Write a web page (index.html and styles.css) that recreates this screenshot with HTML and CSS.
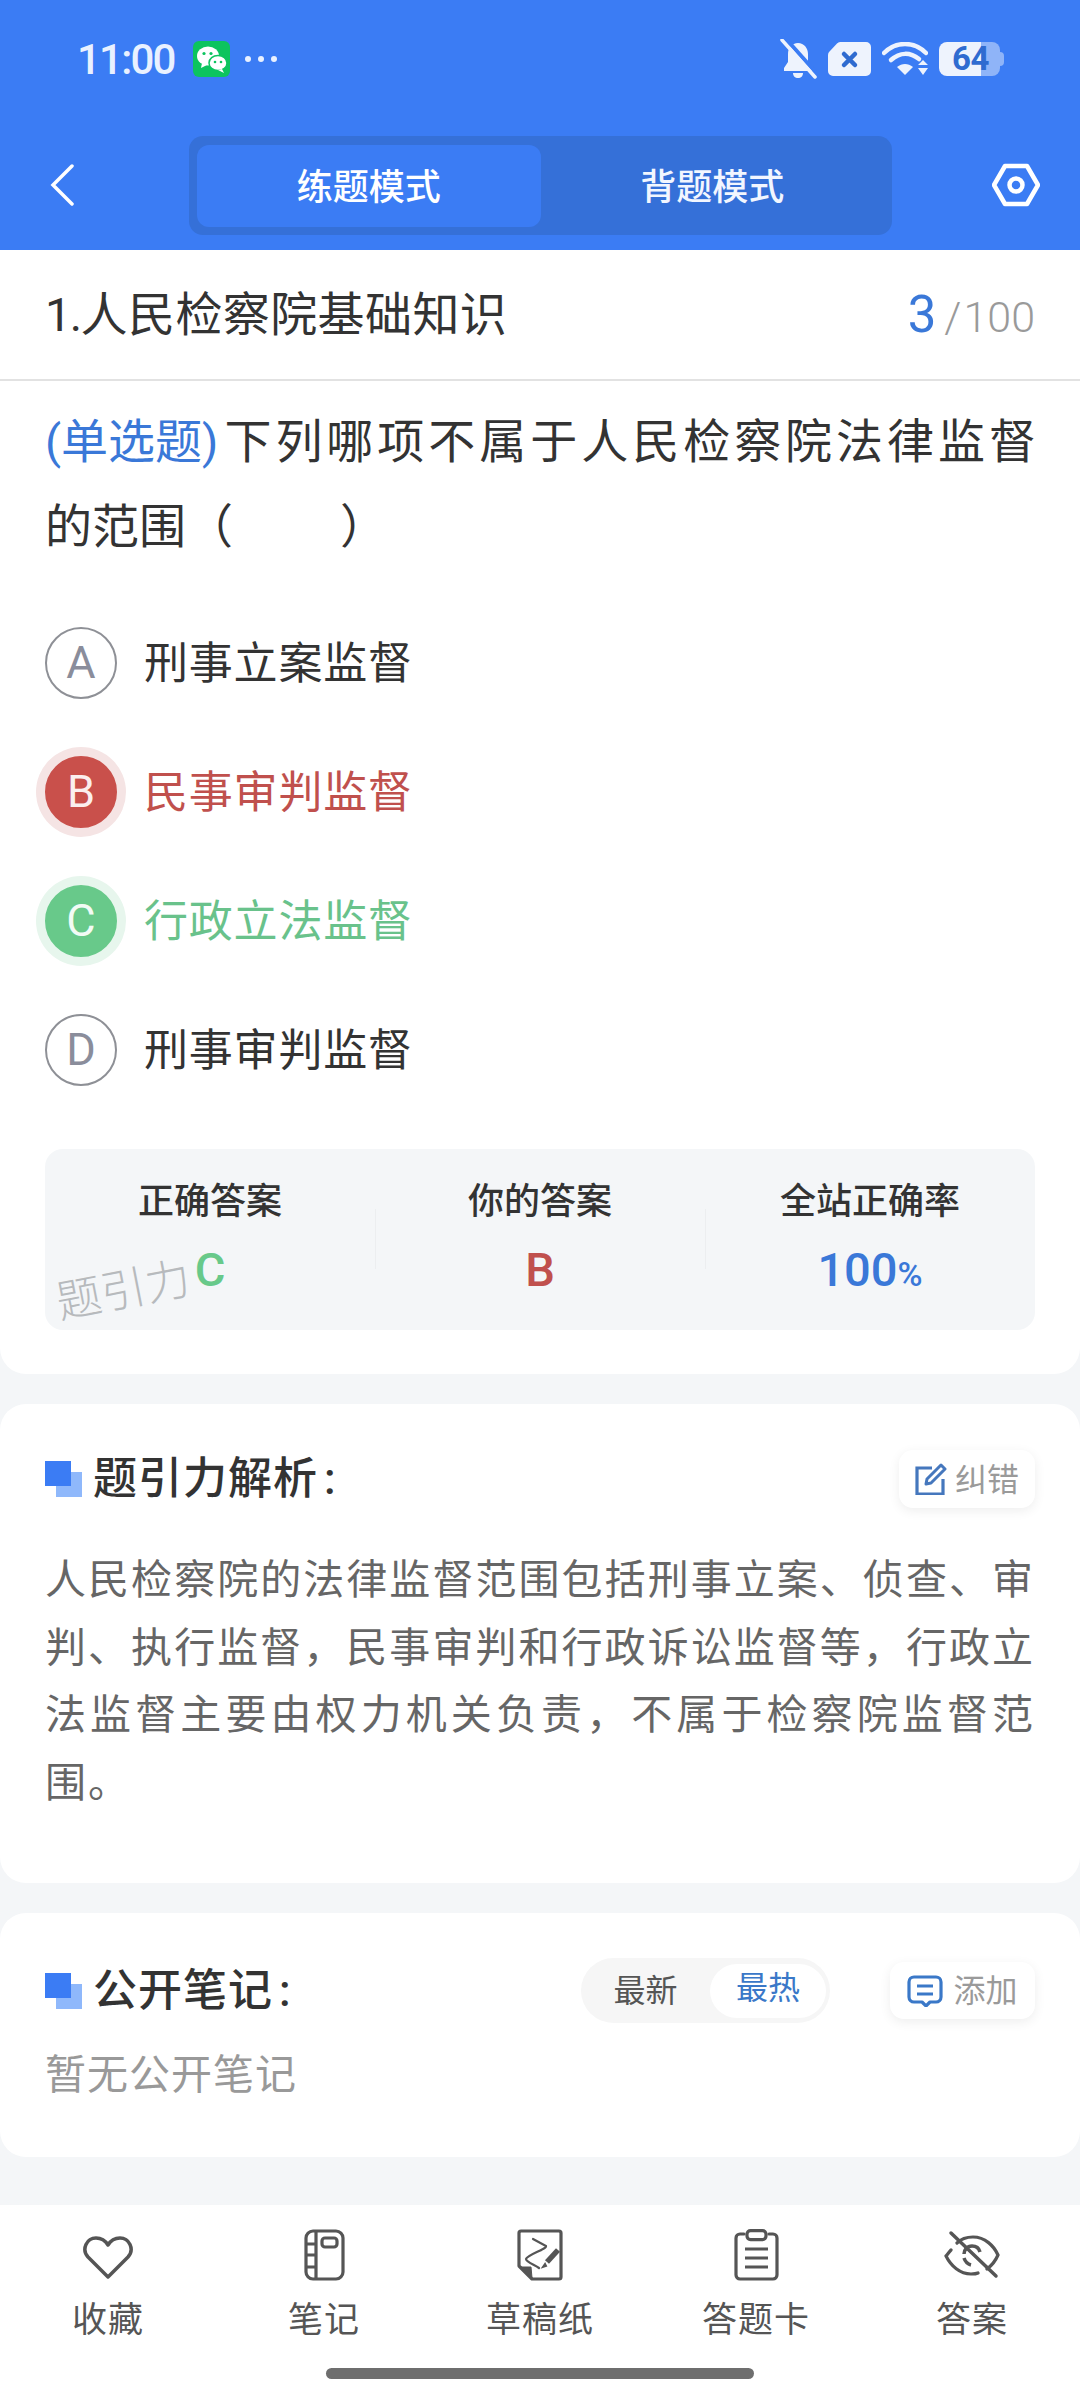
FILE: index.html
```html
<!DOCTYPE html>
<html lang="zh-CN">
<head>
<meta charset="utf-8">
<title>练题模式</title>
<link rel="stylesheet" href="styles.css">
</head>
<body>
<div class="app">
  <header class="top">
    <div class="status">
      <span class="time">11:00</span>
      <svg class="wechat" viewBox="0 0 37 36" width="37" height="36">
        <rect width="37" height="36" rx="6" fill="#0cc45e"/>
        <ellipse cx="15" cy="15" rx="11" ry="9.5" fill="#fff"/>
        <path d="M9 22l-1 5 6-3z" fill="#fff"/>
        <ellipse cx="25" cy="22" rx="9" ry="7.6" fill="#fff" stroke="#0cc45e" stroke-width="1.5"/>
        <path d="M29 28l2 4-6-3z" fill="#fff"/>
        <circle cx="11" cy="12.500" r="1.600" fill="#0cc45e"/>
        <circle cx="18" cy="12.500" r="1.600" fill="#0cc45e"/>
        <circle cx="22" cy="21" r="1.300" fill="#0cc45e"/>
        <circle cx="28" cy="21" r="1.300" fill="#0cc45e"/>
      </svg>
      <span class="dots"><i></i><i></i><i></i></span>
      <div class="status-right">
        <svg viewBox="0 0 38 40" width="38" height="40">
          <path d="M19 4c-6 0-10 5-10 11v8l-4 6v3h28v-3l-4-6v-8c0-6-4-11-10-11z" fill="#eef3fd"/>
          <path d="M14 34h10c0 3-2 5-5 5s-5-2-5-5z" fill="#eef3fd"/>
          <path d="M7 0l33 37" stroke="#3b7cf4" stroke-width="4"/>
          <path d="M3 1l33 37" stroke="#eef3fd" stroke-width="3.500" stroke-linecap="round"/>
        </svg>
        <svg viewBox="0 0 43 34" width="43" height="34">
          <path d="M13 0h25a5 5 0 0 1 5 5v24a5 5 0 0 1-5 5H5a5 5 0 0 1-5-5V13a5 5 0 0 1 1.500-3.500L9 1.500A5 5 0 0 1 13 0z" fill="#eef3fd"/>
          <path d="M16 12l11 11M27 12L16 23" stroke="#2f6bd0" stroke-width="4.500" stroke-linecap="round"/>
        </svg>
        <svg viewBox="0 0 46 34" width="46" height="34">
          <path d="M2 11C14-1 32-1 44 11" fill="none" stroke="#eef3fd" stroke-width="4.500" stroke-linecap="round"/>
          <path d="M9 18c9-8 19-8 28-1" fill="none" stroke="#eef3fd" stroke-width="4.500" stroke-linecap="round"/>
          <path d="M15 25c5-4 11-4 16 0l-8 8z" fill="#eef3fd"/>
          <path d="M36 23l5-5 5 5zM36 26h10l-5 7z" fill="#eef3fd"/>
        </svg>
        <div class="battery"><span>64</span></div>
      </div>
    </div>
    <div class="nav">
      <svg class="back" viewBox="0 0 24 42" width="24" height="42">
        <path d="M22 2L3 21l19 19" fill="none" stroke="#fff" stroke-width="3.500" stroke-linecap="round"/>
      </svg>
      <div class="tabs">
        <div class="tab tab-on">练题模式</div>
        <div class="tab">背题模式</div>
      </div>
      <svg class="gear" viewBox="0 0 48 44" width="48" height="44">
        <path d="M13 3h22l11 19-11 19H13L2 22z" fill="none" stroke="#fff" stroke-width="4.500" stroke-linejoin="round"/>
        <circle cx="24" cy="22" r="6.500" fill="none" stroke="#fff" stroke-width="4.500"/>
      </svg>
    </div>
  </header>

  <main class="main">
    <section class="card card-question">
      <div class="title-bar">
        <h1 class="chapter"><span class="chapter-no">1.</span>人民检察院基础知识</h1>
        <div class="progress"><b>3</b><span class="slash">/</span><span>100</span></div>
      </div>
      <div class="question">
        <p class="q-first"><span class="q-type">(单选题)</span>下列哪项不属于人民检察院法律监督</p>
        <p class="q-second">的范围（<span class="q-blank"></span>）</p>
      </div>
      <ul class="options">
        <li class="option"><span class="letter">A</span><span class="opt-text">刑事立案监督</span></li>
        <li class="option wrong"><span class="letter">B</span><span class="opt-text">民事审判监督</span></li>
        <li class="option right"><span class="letter">C</span><span class="opt-text">行政立法监督</span></li>
        <li class="option"><span class="letter">D</span><span class="opt-text">刑事审判监督</span></li>
      </ul>
      <div class="stats">
        <div class="stat"><div class="stat-label">正确答案</div><div class="stat-value green">C</div></div>
        <div class="stat"><div class="stat-label">你的答案</div><div class="stat-value red">B</div></div>
        <div class="stat"><div class="stat-label">全站正确率</div><div class="stat-value blue">100<small>%</small></div></div>
        <span class="watermark">题引力</span>
      </div>
    </section>

    <section class="card card-analysis">
      <div class="card-head">
        <svg class="mark" viewBox="0 0 37 36" width="37" height="36"><rect x="11" y="11" width="26" height="25" fill="#8fb8fb"/><rect width="26" height="25" fill="#3b7cf4"/></svg>
        <h2 class="card-title">题引力解析<span class="colon">:</span></h2>
        <div class="pill-btn">
          <svg viewBox="0 0 32 32" width="32" height="32">
            <path d="M17 5H2v26h26V16" fill="none" stroke="#4577bd" stroke-width="3.200"/>
            <path d="M12 16L26 2l4 4-14 14-5 1z" fill="none" stroke="#4577bd" stroke-width="3" stroke-linejoin="round"/>
          </svg>
          <span class="pill-text">纠错</span>
        </div>
      </div>
      <p class="analysis">人民检察院的法律监督范围包括刑事立案、侦查、审判、执行监督，民事审判和行政诉讼监督等，行政立法监督主要由权力机关负责，不属于检察院监督范围。</p>
    </section>

    <section class="card card-notes">
      <div class="card-head">
        <svg class="mark" viewBox="0 0 37 36" width="37" height="36"><rect x="11" y="11" width="26" height="25" fill="#8fb8fb"/><rect width="26" height="25" fill="#3b7cf4"/></svg>
        <h2 class="card-title">公开笔记<span class="colon">:</span></h2>
        <div class="segment">
          <span class="seg"><span class="seg-text">最新</span></span>
          <span class="seg seg-on"><span class="seg-text">最热</span></span>
        </div>
        <div class="pill-btn pill-add">
          <svg viewBox="0 0 36 32" width="36" height="32">
            <path d="M7 2h22a5 5 0 0 1 5 5v15a5 5 0 0 1-5 5h-6l-4 4-4-4H7a5 5 0 0 1-5-5V7a5 5 0 0 1 5-5z" fill="none" stroke="#3a78c8" stroke-width="3.200" stroke-linejoin="round"/>
            <path d="M10 11h16M10 19h16" stroke="#3a78c8" stroke-width="3.200"/>
          </svg>
          <span class="pill-text">添加</span>
        </div>
      </div>
      <p class="empty">暂无公开笔记</p>
    </section>
  </main>

  <footer class="tabbar">
    <div class="bar-items">
      <div class="bar-item">
        <svg class="heart" viewBox="0 0 52 44" width="52" height="44">
          <path d="M26 41L6 21C-1 13 5 2 14 2c5 0 9 2 12 7 3-5 7-7 12-7 9 0 15 11 8 19z" fill="none" stroke="#555" stroke-width="3.500" stroke-linejoin="round"/>
        </svg>
        <span>收藏</span>
      </div>
      <div class="bar-item">
        <svg viewBox="0 0 41 52" width="41" height="52" fill="none" stroke="#555" stroke-width="3.200">
          <rect x="2" y="2" width="37" height="48" rx="7"/>
          <path d="M12 2v48M2 15h10M2 26h10M2 38h10"/>
          <rect x="18" y="9" width="15" height="9" rx="3"/>
        </svg>
        <span>笔记</span>
      </div>
      <div class="bar-item">
        <svg viewBox="0 0 46 52" width="46" height="52" fill="none" stroke="#555" stroke-width="3.200">
          <path d="M4 2h38a2 2 0 0 1 2 2v44a2 2 0 0 1-2 2H15L2 37V4a2 2 0 0 1 2-2z" stroke-linejoin="round"/>
          <path d="M3 38l11 0 1 11z" fill="#555" stroke-width="1"/>
          <path d="M16 10l13 7C30 20 10 26 9 30c0 3 9 6 13 9" stroke-width="2.200" stroke-linecap="round"/>
          <path d="M41 21L30 33" stroke-width="5.500"/>
          <path d="M28 35l-2 3 3-1z" stroke-width="2"/>
        </svg>
        <span>草稿纸</span>
      </div>
      <div class="bar-item">
        <svg viewBox="0 0 45 52" width="45" height="52" fill="none" stroke="#555" stroke-width="3.200">
          <path d="M10 5H6a4 4 0 0 0-4 4v37a4 4 0 0 0 4 4h33a4 4 0 0 0 4-4V9a4 4 0 0 0-4-4h-4" stroke-linecap="round"/>
          <rect x="13" y="1.600" width="19" height="9" rx="3.500"/>
          <path d="M11 20h23M11 29h23M11 38h23"/>
        </svg>
        <span>答题卡</span>
      </div>
      <div class="bar-item">
        <svg viewBox="0 0 56 46" width="56" height="46" fill="none" stroke="#555" stroke-width="3.200">
          <path d="M2 24c1-1 3-4 5-6M13 11C18 6 23 5 29 5c12 0 21 9 25 18-3 7-7 11-11 14M34 41c-2 1-4 1-7 1-11 0-20-8-25-18" stroke-linecap="round"/>
          <path d="M20 22c0-4 3-8 8-8 4 0 7 2 8 6M20 26c1 3 3 6 7 7" stroke-width="3.500"/>
          <path d="M7 1l45 43" stroke-linecap="round" stroke-width="3.500"/>
        </svg>
        <span>答案</span>
      </div>
    </div>
    <div class="home-bar"></div>
  </footer>
</div>
</body>
</html>
```

FILE: styles.css
```css
* { box-sizing: border-box; }
html, body { margin: 0; padding: 0; }
body {
  font-family: "Roboto", "Noto Sans CJK SC", sans-serif;
  color: #333;
  background: #f4f6f8;
}
h1, h2, p, ul { margin: 0; padding: 0; }
ul { list-style: none; }
svg { display: block; flex: none; }

.app {
  width: 1080px;
  height: 2400px;
  display: flex;
  flex-direction: column;
  overflow: hidden;
}

/* header */
.top { height: 250px; background: #3b7cf4; flex: none; }
.status {
  height: 118px;
  display: flex;
  align-items: center;
  padding: 0 80px 0 77px;
}
.time {
  font-size: 42px;
  font-weight: 500;
  letter-spacing: -1.800px;
  color: #e9f1ff;
}
.wechat { margin-left: 18px; }
.dots { display: flex; gap: 7px; margin-left: 15px; }
.dots i { width: 6px; height: 6px; border-radius: 50%; background: #e9f1ff; display: block; }
.status-right { margin-left: auto; display: flex; align-items: center; gap: 11px; }
.battery {
  position: relative;
  width: 61px;
  height: 34px;
  border-radius: 8px;
  background: linear-gradient(90deg, #eef3fd 0 42px, #8fb4f8 42px);
  font-size: 33px;
  font-weight: 700;
  line-height: 34px;
  color: #2f6bd0;
  padding-left: 13px;
  letter-spacing: -0.500px;
}
.battery::after {
  content: "";
  position: absolute;
  right: -4px;
  top: 10px;
  width: 4px;
  height: 14px;
  border-radius: 0 4px 4px 0;
  background: #8fb4f8;
}
.nav {
  margin-top: 18px;
  height: 99px;
  display: flex;
  align-items: center;
  padding: 0 40px 0 50px;
}
.back, .gear { margin-bottom: 2px; }
.tabs {
  margin-left: 115px;
  width: 703px;
  height: 99px;
  display: flex;
  padding: 9px 8px 8px;
  background: #3570d8;
  border-radius: 14px;
}
.tab {
  flex: 1;
  display: flex;
  align-items: center;
  justify-content: center;
  padding-bottom: 5px;
  font-size: 36px;
  font-weight: 500;
  color: #f2f6ff;
  border-radius: 12px;
}
.tab-on { background: #3b7cf4; color: #fff; }
.gear { margin-left: auto; }

/* cards */
.main { flex: 1; display: flex; flex-direction: column; gap: 30px; }
.card { background: #fff; border-radius: 26px; }
.card-question {
  border-radius: 0 0 26px 26px;
  padding-bottom: 44px;
}
.title-bar {
  height: 131px;
  display: flex;
  align-items: center;
  justify-content: space-between;
  padding: 0 45px;
  border-bottom: 2px solid #e2e2e2;
}
.chapter {
  font-size: 47px;
  font-weight: 400;
  color: #333;
  letter-spacing: 0.400px;
  line-height: 60px;
}
.chapter-no { letter-spacing: -1.600px; }
.progress { display: flex; align-items: baseline; font-size: 43px; color: #9a9a9a; font-weight: 300; }
.progress b { font-size: 51px; font-weight: 400; color: #3a78d8; }
.slash { margin: 0 2px 0 8px; }

.question {
  padding: 18px 44px 0 45px;
  font-size: 47px;
  line-height: 85px;
  color: #333;
}
.q-first { text-align: justify; text-align-last: justify; }
.q-type { display: inline-block; color: #3a78d8; margin-right: 2px; }
.q-blank { display: inline-block; width: 107px; }

.options { margin-top: 29px; padding: 0 45px; }
.option {
  height: 129px;
  display: flex;
  align-items: center;
}
.letter {
  width: 72px;
  height: 72px;
  flex: none;
  display: flex;
  align-items: center;
  justify-content: center;
  border-radius: 50%;
  border: 2px solid #8e9096;
  font-size: 45px;
  font-weight: 400;
  color: #8a8d9b;
}
.opt-text {
  margin-left: 27px;
  padding-bottom: 5px;
  font-size: 44px;
  letter-spacing: 0.800px;
  color: #333;
}
.wrong .letter { background: #c9504b; border-color: #c9504b; color: #fbeeee; box-shadow: 0 0 0 9px #f5e4e4; }
.wrong .opt-text { color: #c0504d; }
.right .letter { background: #68c98a; border-color: #68c98a; color: #f2fbf5; box-shadow: 0 0 0 9px #e7f6ed; }
.right .opt-text { color: #69c28b; }

.stats {
  position: relative;
  margin: 35px 45px 0;
  height: 181px;
  padding-top: 27px;
  display: grid;
  grid-template-columns: repeat(3, 1fr);
  background: #f4f6f8;
  border-radius: 18px;
}
.stat { position: relative; text-align: center; }
.stat + .stat::before {
  content: "";
  position: absolute;
  left: 0;
  top: 33px;
  width: 1px;
  height: 60px;
  background: #eceef0;
}
.stat-label { font-size: 36px; font-weight: 500; line-height: 52px; color: #333; }
.stat-value { margin-top: 12px; font-size: 47px; font-weight: 500; line-height: 60px; }
.stat-value small { font-size: 34px; font-weight: 500; }
.green { color: #68c98a; }
.red { color: #c0504d; }
.blue { color: #3a78d8; }
.watermark {
  position: absolute;
  left: 11px;
  top: 112px;
  font-size: 45px;
  line-height: 60px;
  font-weight: 300;
  color: #b7babd;
  transform: rotate(-11deg);
}

.card-head { display: flex; align-items: center; }
.card-analysis { padding: 46px 45px 66px; }
.card-notes { padding: 45px 45px 52px; }
.card-title {
  margin-left: 11px;
  font-size: 44px;
  font-weight: 500;
  line-height: 58px;
  letter-spacing: 1px;
  color: #333;
}
.colon { margin-left: 6px; }
.pill-btn {
  margin-left: auto;
  width: 136px;
  height: 58px;
  display: flex;
  align-items: center;
  justify-content: center;
  gap: 8px;
  background: #fff;
  border-radius: 14px;
  box-shadow: 0 3px 12px rgba(0, 0, 0, 0.07);
  font-size: 32px;
  color: #9a9a9a;
}
.pill-text { padding-bottom: 5px; }
.analysis {
  margin-top: 39px;
  font-size: 41px;
  line-height: 67.500px;
  letter-spacing: 2px;
  text-align: justify;
  color: #666;
}
.segment {
  margin-left: auto;
  width: 249px;
  height: 65px;
  display: flex;
  align-items: center;
  padding: 0 4px 0 0;
  background: #f6f6f6;
  border-radius: 33px;
  font-size: 32px;
  color: #555;
}
.seg { flex: 1; text-align: center; }
.seg-text { position: relative; top: -3px; }
.seg-on {
  flex: none;
  width: 116px;
  height: 54px;
  line-height: 54px;
  background: #fff;
  border-radius: 27px;
  color: #3a78c8;
}
.pill-add { margin-left: 60px; width: 145px; height: 57px; gap: 10px; }
.empty {
  margin-top: 22px;
  font-size: 41px;
  line-height: 60px;
  letter-spacing: 1px;
  color: #999;
}

/* bottom bar */
.tabbar { flex: none; height: 195px; background: #fff; padding-top: 22px; }
.bar-items { display: grid; grid-template-columns: repeat(5, 216px); }
.bar-item {
  display: flex;
  flex-direction: column;
  align-items: center;
  font-size: 35px;
  letter-spacing: 1px;
  line-height: 44px;
  color: #555;
}
.bar-item svg { height: 56px; padding: 2px 0; }
.bar-item .heart { padding: 6px 0 0; }
.bar-item span { margin-top: 16px; }
.home-bar {
  width: 428px;
  height: 11px;
  margin: 25px auto 0;
  border-radius: 6px;
  background: #6e6e6e;
}
```
